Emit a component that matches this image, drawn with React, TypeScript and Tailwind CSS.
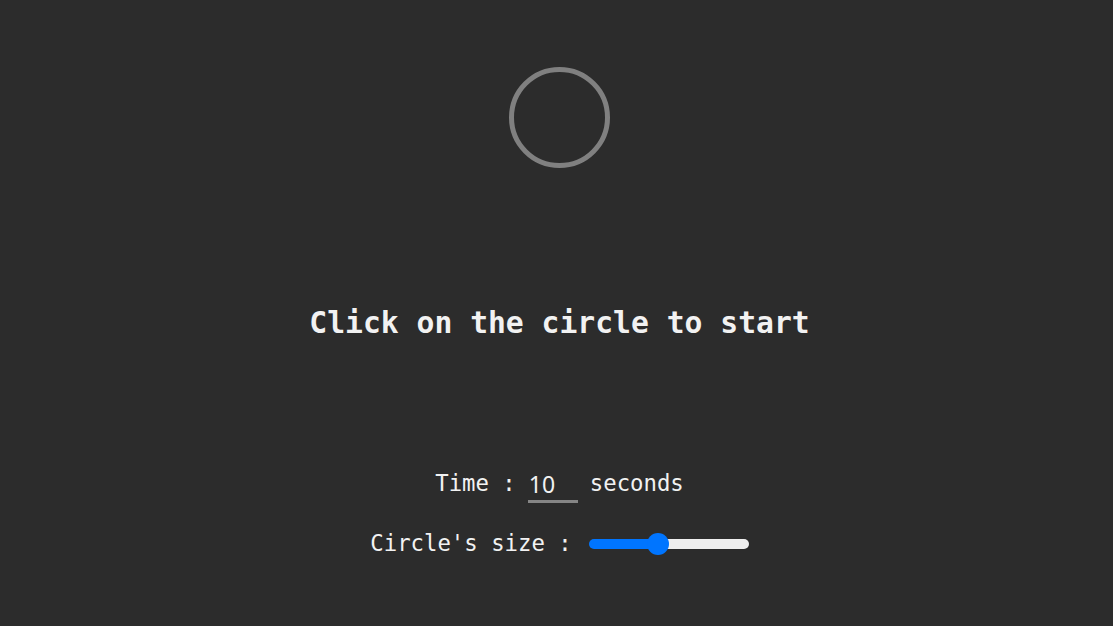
import { useState } from "react";

const mono = { fontFamily: '"DejaVu Sans Mono", "Liberation Mono", monospace' };

const App = () => {
  const [time, setTime] = useState("10");
  const [size, setSize] = useState(42);

  // fill the track up to the thumb's centre (thumb is 22px on a 160px track)
  const fill = ((11 + (size / 100) * 138) / 160) * 100;

  return (
    <div
      className="min-h-screen w-full bg-[#2c2c2c] text-[#f2f2f2] flex flex-col items-center pt-[67px] pl-[6px]"
      style={mono}
    >
      {/* Target circle */}
      <button className="w-[101px] h-[101px] rounded-full border-[5px] border-[#808080] bg-transparent" />

      {/* Prompt */}
      <h1 className="mt-[137px] h-[36px] leading-[36px] text-[29.7px] font-bold">
        Click on the circle to start
      </h1>

      {/* Settings */}
      <div className="mt-[125px] h-[36px] flex items-center gap-3 text-[22.3px]">
        <span>Time :</span>
        <input
          type="text"
          value={time}
          onChange={(e) => setTime(e.target.value)}
          className="w-[50px] h-[34px] mt-[4px] bg-transparent border-b-[3px] border-[#858585] text-[#f2f2f2] text-[23px] pl-[1px] outline-none"
          style={{ fontFamily: '"Noto Sans", "Open Sans", sans-serif' }}
        />
        <span>seconds</span>
      </div>

      <div className="mt-[24px] h-[36px] flex items-center gap-[17px] text-[22.3px]">
        <span>Circle's size :</span>
        <input
          type="range"
          min={0}
          max={100}
          value={size}
          onChange={(e) => setSize(Number(e.target.value))}
          className="m-0 appearance-none w-[160px] h-[10px] rounded-full outline-none cursor-pointer [&::-webkit-slider-thumb]:appearance-none [&::-webkit-slider-thumb]:w-[22px] [&::-webkit-slider-thumb]:h-[22px] [&::-webkit-slider-thumb]:rounded-full [&::-webkit-slider-thumb]:bg-[#0075ff]"
          style={{
            background: `linear-gradient(to right, #0075ff ${fill}%, #efefef ${fill}%)`,
          }}
        />
      </div>
    </div>
  );
};

export default App;
